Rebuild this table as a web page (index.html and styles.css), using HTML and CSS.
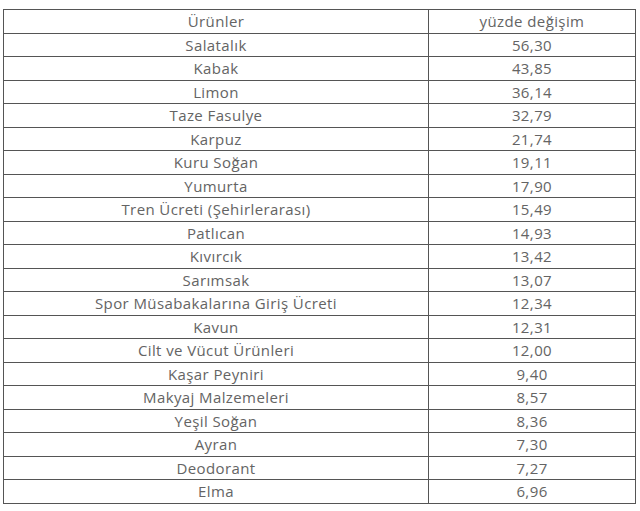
FILE: index.html
```html
<!DOCTYPE html>
<html lang="tr">
<head>
<meta charset="utf-8">
<link rel="stylesheet" href="styles.css">
</head>
<body>
<table class="tbl">
<tr><td>Ürünler</td><td>yüzde değişim</td></tr>
<tr><td>Salatalık</td><td>56,30</td></tr>
<tr><td>Kabak</td><td>43,85</td></tr>
<tr><td>Limon</td><td>36,14</td></tr>
<tr><td>Taze Fasulye</td><td>32,79</td></tr>
<tr><td>Karpuz</td><td>21,74</td></tr>
<tr><td>Kuru Soğan</td><td>19,11</td></tr>
<tr><td>Yumurta</td><td>17,90</td></tr>
<tr><td>Tren Ücreti (Şehirlerarası)</td><td>15,49</td></tr>
<tr><td>Patlıcan</td><td>14,93</td></tr>
<tr><td>Kıvırcık</td><td>13,42</td></tr>
<tr><td>Sarımsak</td><td>13,07</td></tr>
<tr><td>Spor Müsabakalarına Giriş Ücreti</td><td>12,34</td></tr>
<tr><td>Kavun</td><td>12,31</td></tr>
<tr><td>Cilt ve Vücut Ürünleri</td><td>12,00</td></tr>
<tr><td>Kaşar Peyniri</td><td>9,40</td></tr>
<tr><td>Makyaj Malzemeleri</td><td>8,57</td></tr>
<tr><td>Yeşil Soğan</td><td>8,36</td></tr>
<tr><td>Ayran</td><td>7,30</td></tr>
<tr><td>Deodorant</td><td>7,27</td></tr>
<tr><td>Elma</td><td>6,96</td></tr>
</table>
</body>
</html>
```
FILE: styles.css
```css
html, body {
  margin: 0;
  background: #ffffff;
}
body {
  padding: 9px 0 0 3px;
  font-family: "Open Sans", "Liberation Sans", sans-serif;
  color: #646464;
}
.tbl {
  border-collapse: collapse;
  width: 633px;
  table-layout: fixed;
}
.tbl td {
  border: 1.5px solid #555555;
  height: 22.5px;
  padding: 0;
  text-align: center;
  font-size: 15px;
  letter-spacing: 0.4px;
  line-height: 20px;
  white-space: nowrap;
}
.tbl td:first-child {
  width: 424px;
}
```
